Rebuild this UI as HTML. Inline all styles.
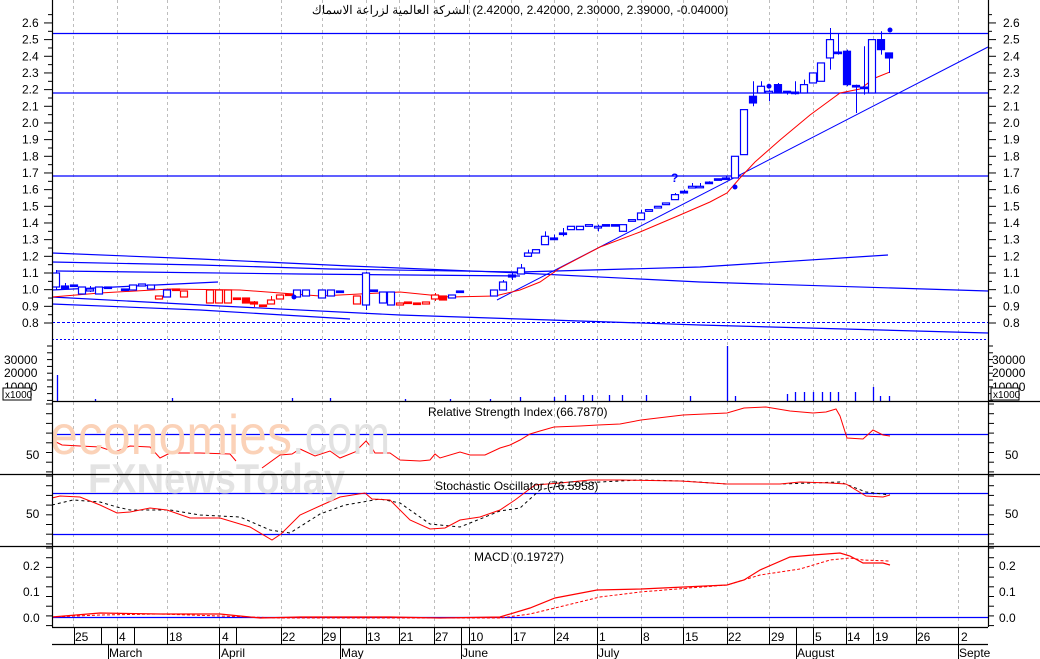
<!DOCTYPE html>
<html><head><meta charset="utf-8"><style>
html,body{margin:0;padding:0;background:#fff;}
svg{display:block;font-family:"Liberation Sans","Noto Sans CJK SC",sans-serif;}
</style></head><body>
<svg id="s" width="1040" height="659" viewBox="0 0 1040 659" xmlns="http://www.w3.org/2000/svg">
<rect width="1040" height="659" fill="#fff"/>
<g id="grid" stroke="#bdbdbd" stroke-dasharray="3,3" stroke-width="1"></g>
<g id="lines" fill="none"></g>
<g id="cdl"></g>
<g id="ind" fill="none"></g>
<!-- watermark -->
<text x="50" y="454" font-size="56" fill="#fbd2b8" textLength="242" lengthAdjust="spacingAndGlyphs">economies</text>
<text x="292" y="454" font-size="56" fill="#e2e2e2" textLength="98" lengthAdjust="spacingAndGlyphs">.com</text>
<text x="88" y="493" font-size="42" font-weight="bold" fill="#dedede" fill-opacity="0.85" textLength="257" lengthAdjust="spacingAndGlyphs">FXNewsToday</text>
<!-- frame -->
<g stroke="#000" stroke-width="1.2" fill="none">
<line x1="52.5" y1="0" x2="52.5" y2="627"/>
<line x1="988.5" y1="0" x2="988.5" y2="627"/>
<line x1="52" y1="401.5" x2="1040" y2="401.5"/>
<line x1="0" y1="474.5" x2="1040" y2="474.5"/>
<line x1="0" y1="546.5" x2="1040" y2="546.5"/>
<line x1="52" y1="627.5" x2="988" y2="627.5"/>
<line x1="52" y1="644.5" x2="988" y2="644.5"/>
</g>
<g id="ticks" stroke="#000" stroke-width="1"></g>
<g font-size="12" fill="#000">
<text x="520" y="14" text-anchor="middle" direction="ltr" unicode-bidi="embed">&#x200E;الشركة العالمية لزراعة الاسماك&#x200E; (2.42000, 2.42000, 2.30000, 2.39000, -0.04000)</text>
<text x="428" y="416">Relative Strength Index (66.7870)</text>
<text x="435" y="490">Stochastic Oscillator (76.5958)</text>
<text x="474" y="561">MACD (0.19727)</text>
</g>
<g id="lab" font-size="12" fill="#000"></g>
<g font-size="12" fill="#000">
<text x="4" y="364">30000</text><text x="4" y="377">20000</text><text x="4" y="391">10000</text>
<text x="992" y="364">30000</text><text x="992" y="377">20000</text><text x="992" y="391">10000</text>
<text x="26" y="459">50</text><text x="1005" y="459">50</text>
<text x="26" y="518">50</text><text x="1005" y="518">50</text>
<text x="23" y="570">0.2</text><text x="23" y="596">0.1</text><text x="23" y="622">0.0</text>
<text x="999" y="570">0.2</text><text x="999" y="596">0.1</text><text x="999" y="622">0.0</text>
</g>
<rect x="3" y="388" width="28" height="12" fill="#fff" stroke="#000"/>
<text x="5" y="398" font-size="10">x1000</text>
<rect x="991" y="388" width="28" height="12" fill="#fff" stroke="#000"/>
<text x="993" y="398" font-size="10">x1000</text>
<g font-size="12" fill="#000">
<text x="75" y="641">25</text><text x="119" y="641">4</text><text x="169" y="641">18</text><text x="222" y="641">4</text>
<text x="282" y="641">22</text><text x="323" y="641">29</text><text x="367" y="641">13</text><text x="400" y="641">21</text>
<text x="435" y="641">27</text><text x="470" y="641">10</text><text x="513" y="641">17</text><text x="556" y="641">24</text>
<text x="599" y="641">1</text><text x="643" y="641">8</text><text x="685" y="641">15</text><text x="728" y="641">22</text>
<text x="771" y="641">29</text><text x="815" y="641">5</text><text x="847" y="641">14</text><text x="875" y="641">19</text>
<text x="917" y="641">26</text><text x="961" y="641">2</text>
<text x="109" y="657">March</text><text x="221" y="657">April</text><text x="341" y="657">May</text><text x="462" y="657">June</text>
<text x="598" y="657">July</text><text x="797" y="657">August</text><text x="959" y="657">Septe</text>
</g>
<g id="dt" stroke="#000" stroke-width="1"></g>
</svg>
<script>
var NS="http://www.w3.org/2000/svg";
function el(p,t,a){var e=document.createElementNS(NS,t);for(var k in a)e.setAttribute(k,a[k]);document.getElementById(p).appendChild(e);return e;}
var gx=[73,117,167,219,281,322,366,399,434,469,511,554,597,641,683,727,769,813,846,873,916,958];
gx.forEach(function(x){el("grid","line",{x1:x+.5,y1:0,x2:x+.5,y2:627});});
[74,101,117,134,167,219,236,281,322,340,366,399,434,461,469,511,554,597,641,683,727,769,796,813,846,873,916,958].forEach(function(x){el("dt","line",{x1:x+.5,y1:627,x2:x+.5,y2:644});});
[108,219,340,461,597,796,958].forEach(function(x){el("dt","line",{x1:x+.5,y1:644,x2:x+.5,y2:659});});
function Y(p){return 323-(p-0.8)*166.7;}
for(var i=0;i<=18;i++){var p=0.8+i*0.1,y=Y(p);
 el("lab","text",{x:22,y:y+4}).textContent=p.toFixed(1);
 el("lab","text",{x:1003,y:y+4}).textContent=p.toFixed(1);
 el("ticks","line",{x1:44,y1:y,x2:52,y2:y});el("ticks","line",{x1:988,y1:y,x2:996,y2:y});
 el("ticks","line",{x1:48,y1:y-8.3,x2:52,y2:y-8.3});el("ticks","line",{x1:988,y1:y-8.3,x2:992,y2:y-8.3});}
[[404,474],[476,546],[548,627]].forEach(function(r){for(var y=r[0];y<r[1];y+=9.7){el("ticks","line",{x1:46,y1:y,x2:52,y2:y});el("ticks","line",{x1:988,y1:y,x2:994,y2:y});}});
for(var y=346;y<401;y+=6.8){el("ticks","line",{x1:47,y1:y,x2:52,y2:y});el("ticks","line",{x1:988,y1:y,x2:993,y2:y});}
function pl(g,pts,c,w,d){var a={points:pts,stroke:c,"stroke-width":w||1,fill:"none"};if(d)a["stroke-dasharray"]=d;el(g,"polyline",a);}
var B="#0000ff";
pl("lines","52,33.5 988,33.5",B,1.3);pl("lines","52,93 988,93",B,1.3);pl("lines","52,176 988,176",B,1.3);
pl("lines","52,322.5 988,322.5",B,1,"3,2");pl("lines","52,339.5 988,339.5",B,1,"2,2");
pl("lines","52,253 200,259 350,266 520,273 700,282 988,291",B,1.2);
pl("lines","52,262 200,265 330,269 520,272 700,267 888,255",B,1.2);
pl("lines","57,271 300,274 520,276",B,1.2);
pl("lines","52,290 218,282",B,1.2);
pl("lines","52,297 220,306 400,315 520,319 700,325 988,333",B,1.2);
pl("lines","52,304 200,310 350,319",B,1.2);
pl("lines","497,300 988,47",B,1);
pl("lines","52,297 100,293 170,289 240,290 320,296 400,292 450,297 495,296 520,290 540,282 560,268 600,247 640,232 680,215 710,202 727,193 740,178 755,162 780,140 810,115 840,93 860,89 875,78 890,72","#ff0000",1);
pl("lines","52,434.5 988,434.5",B,1.2);pl("lines","52,493.5 988,493.5",B,1.2);pl("lines","52,534.5 988,534.5",B,1.2);pl("lines","52,617.5 988,617.5",B,1.2);
var R="#ff0000";
var L=[[56,273,287,0,B,270,290],[65,286,289,1,B,283,289],[74,285,286,1,B],[82,287,294,0,B],[90,289,291,0,B,286,292],[99,287,294,0,B],[108,287,288,1,B],[125,289,290,1,B],[133,285,290,0,B],[142,284,286,0,B],[151,285,289,0,B],[159,296,299,0,R],[167,290,297,0,B],[176,289,290,1,R],[184,291,297,0,R],[210,290,303,0,R],[219,290,303,0,R],[228,290,303,0,R],[237,298,299,1,R],[246,298,303,1,R],[254,302,304,1,R,301,307],[263,305,306,1,R],[271,300,304,0,R,296,304],[280,295,299,0,R],[289,294,295,1,R],[297,290,297,0,B],[306,290,296,0,B],[322,290,298,0,B],[331,290,296,0,B],[340,291,292,1,B],[357,296,304,0,R],[366,273,305,0,B,272,310],[374,290,291,1,B],[383,292,303,0,B],[391,292,305,0,B],[400,303,305,0,R],[408,302,303,1,R],[417,303,304,1,R],[426,302,304,0,R],[435,295,299,0,R,293,301],[443,296,300,1,R],[452,295,298,0,B],[460,291,292,1,B],[494,290,296,0,B],[503,282,290,0,B,280,290],[512,275,277,1,B,272,280],[521,268,274,0,B,264,274]];
function P(x,a,b,f,c,wa,wb){return [x,Y(a),Y(b),f,c,wa!=null?Y(wa):null,wb!=null?Y(wb):null];}
var Rt=[P(528,1.22,1.2,0,B,1.24),P(536,1.24,1.22,0,B),P(545,1.32,1.27,0,B,1.35),P(554,1.31,1.30,1,B,1.33),P(563,1.34,1.335,1,B,1.37,1.32),P(571,1.38,1.36,0,B),P(580,1.38,1.36,0,B),P(589,1.39,1.38,0,B),P(598,1.38,1.37,0,B,1.39,1.35),P(606,1.39,1.385,1,B),P(615,1.39,1.385,1,B,1.39,1.38),P(623,1.39,1.35,0,B),P(632,1.42,1.41,0,B),P(641,1.46,1.42,0,B,1.48),P(649,1.48,1.47,0,B),P(658,1.50,1.49,0,B),P(666,1.52,1.51,0,B),P(675,1.57,1.54,0,B,1.58),P(684,1.59,1.58,1,B,1.6,1.58),P(692,1.62,1.61,0,B,1.64),P(700,1.62,1.615,0,B,1.64),P(709,1.645,1.64,1,B,1.65),P(718,1.665,1.66,1,B),P(726,1.67,1.665,1,B,1.68),P(735,1.80,1.67,0,B),P(744,2.08,1.81,0,B),P(753,2.16,2.12,1,B,2.25,2.1),P(761,2.22,2.18,0,B,2.25),P(769,2.19,2.18,0,B,2.2,2.13),P(778,2.23,2.18,1,B,2.24),P(787,2.19,2.185,1,B,2.19,2.17),P(795,2.185,2.18,1,B,2.25,2.17),P(804,2.23,2.18,0,B,2.26),P(813,2.30,2.24,0,B),P(821,2.36,2.25,0,B),P(830,2.50,2.39,0,B,2.57,2.32),P(838,2.425,2.42,1,B,2.54,2.41),P(847,2.43,2.23,1,B,2.44,2.22),P(856,2.225,2.22,1,B,2.23,2.06),P(864,2.215,2.21,1,B,2.46,2.17),P(872,2.5,2.18,0,B),P(881,2.5,2.44,1,B,2.55,2.41),P(889,2.42,2.39,1,B,2.42,2.30)];
L.concat(Rt).forEach(function(c){var x=c[0],t=c[1],b=c[2];
 if(c[5]!=null)el("cdl","line",{x1:x+.5,y1:c[5],x2:x+.5,y2:t,stroke:c[4]});
 if(c[6]!=null)el("cdl","line",{x1:x+.5,y1:b,x2:x+.5,y2:c[6],stroke:c[4]});
 var h=Math.max(b-t,1.5);
 el("cdl","rect",{x:x-3.5,y:t,width:7,height:h,fill:c[3]?c[4]:"#fff",stroke:c[4],"stroke-width":1.2});});
el("cdl","circle",{cx:769,cy:Y(2.22),r:2.5,fill:B});el("cdl","circle",{cx:735,cy:187,r:2.5,fill:B});el("cdl","circle",{cx:890,cy:30,r:2.5,fill:B});
el("cdl","circle",{cx:294,cy:297,r:2.5,fill:B});
var q=el("cdl","text",{x:671,y:182,"font-size":"12","font-weight":"bold",fill:B});q.textContent="?";
[[57,375],[727,346],[873,387],[565,395],[583,395],[592,395],[609,395],[622,395],[646,395],[690,396],[735,396],[787,394],[795,392],[804,392],[813,392],[822,392],[830,392],[838,392],[855,392],[880,396],[889,396],[520,397],[554,397],[172,398],[292,398],[330,398],[95,399],[405,399],[450,399],[490,399]].forEach(function(v){el("ind","line",{x1:v[0]+.5,y1:v[1],x2:v[0]+.5,y2:401,stroke:B,"stroke-width":1.3});});
pl("ind","52,440 62,445 80,446 100,447 115,452 130,446 150,447 160,458 170,453 200,453 230,454 236,461",R,1);
pl("ind","262,468 280,455 292,454 300,449 315,456 330,451 340,458 355,452 366,441 372,448 375,453 390,453 400,460 420,461 430,460 435,454 440,458 460,452 470,455 485,455 500,448 510,445 520,440 530,434 540,431 554,427 580,426 598,425 620,424 641,420 683,415 727,413 744,408 766,407 790,411 813,413 826,412 836,409 840,416 847,438 863,439 873,430 883,435 890,436",R,1);
pl("ind","52,505 73,500 100,502 117,507 130,510 170,510 200,515 240,517 270,530 290,533 320,514 345,505 380,499 400,503 430,524 460,527 500,511 520,508 540,490 553,487 600,482 640,480 683,481 727,484 780,484 840,482 866,492 890,495","#000",1,"3,3");
pl("ind","52,498 60,496 80,497 100,505 117,513 130,512 150,508 167,510 190,518 220,518 250,527 272,540 281,534 300,515 322,505 340,497 365,493 372,499 390,500 410,520 430,529 445,528 460,520 480,517 500,510 515,500 535,485 560,483 590,480 620,480 680,481 727,484 780,484 800,482 830,483 846,484 866,496 883,497 890,495",R,1);
pl("ind","52,617 100,615 160,614 280,618 500,618 530,614 555,608 600,597 640,592 727,585 760,575 800,569 830,560 850,558 863,560 890,561",R,1,"3,2");
pl("ind","52,617 100,613 160,614 220,614 260,618 300,617 360,617 390,617 440,618 500,617 530,608 555,598 597,590 641,589 727,585 744,580 760,570 790,557 813,555 840,553 850,556 863,563 883,563 890,565",R,1.2);
</script>
</body></html>
